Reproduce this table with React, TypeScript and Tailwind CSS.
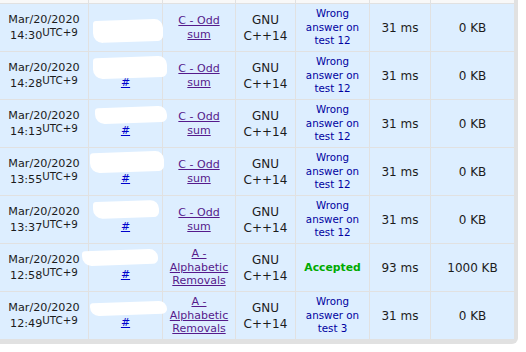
import React from "react"

type Row = {
  time: string
  problem: string[]
  accepted?: boolean
  test?: number
  exec: string
  mem: string
  blob: { l: number; t: number; w: number; h: number }
}

const rows: Row[] = [
  { time: "14:30", problem: ["C - Odd", "sum"], test: 12, exec: "31 ms", mem: "0 KB", blob: { l: 4, t: 16, w: 70, h: 22 } },
  { time: "14:28", problem: ["C - Odd", "sum"], test: 12, exec: "31 ms", mem: "0 KB", blob: { l: 4, t: 5, w: 74, h: 21 } },
  { time: "14:13", problem: ["C - Odd", "sum"], test: 12, exec: "31 ms", mem: "0 KB", blob: { l: 6, t: 7, w: 72, h: 16 } },
  { time: "13:55", problem: ["C - Odd", "sum"], test: 12, exec: "31 ms", mem: "0 KB", blob: { l: 1, t: 4, w: 74, h: 20 } },
  { time: "13:37", problem: ["C - Odd", "sum"], test: 12, exec: "31 ms", mem: "0 KB", blob: { l: 4, t: 5, w: 66, h: 17 } },
  { time: "12:58", problem: ["A -", "Alphabetic", "Removals"], accepted: true, exec: "93 ms", mem: "1000 KB", blob: { l: -7, t: 6, w: 76, h: 15 } },
  { time: "12:49", problem: ["A -", "Alphabetic", "Removals"], test: 3, exec: "31 ms", mem: "0 KB", blob: { l: 1, t: 10, w: 77, h: 13 } },
]

const cols = "grid grid-cols-[89px_74px_73px_60px_74px_61px_83px]"
const cell = "flex items-center justify-center text-center border-r border-b border-[#e1e1e1]"

export default function App() {
  return (
    <div className="min-h-screen bg-white font-['DejaVu_Sans',sans-serif] text-[#1c1c1c]">
      <div className="w-[518px] bg-[#e1e1e1] pr-[4px] pb-[4px] rounded-br-[6px]">
        {/* tail of the previous row */}
        <div className={cols}>
          {[0, 1, 2, 3, 4, 5, 6].map((i) => (
            <div key={i} className={`h-[4px] bg-[#f8f8f8] border-b border-[#e1e1e1] ${i < 6 ? "border-r" : ""}`} />
          ))}
        </div>

        {rows.map((r, i) => (
          <div key={i} className={`${cols} bg-[#ddeeff]`}>
            <div className={`${cell} h-[48px] text-[11.2px] leading-[16px]`}>
              <div className="mt-[1px]">
                Mar/20/2020
                <br />
                <span>{r.time}</span>
                <sup className="text-[10.3px] top-[-0.3em]">UTC+9</sup>
              </div>
            </div>

            <div className={`${cell} relative h-[48px] text-[11px] leading-[13px]`}>
              <div className="mt-[13px]">
                <a className="text-[#0000cc] underline">#</a>
              </div>
              {/* redacted handle */}
              <div
                className="absolute bg-white rounded-[3px_9px_5px_10px] -skew-y-2"
                style={{ left: r.blob.l, top: r.blob.t, width: r.blob.w, height: r.blob.h }}
              />
            </div>

            <div className={`${cell} h-[48px] text-[11px] leading-[13.5px]`}>
              <a className="text-[#551a8b] underline">
                {r.problem.map((p, j) => (
                  <div key={j}>{p}</div>
                ))}
              </a>
            </div>

            <div className={`${cell} h-[48px] text-[12px] leading-[16px]`}>
              <div>
                GNU
                <br />
                C++14
              </div>
            </div>

            <div className={`${cell} h-[48px] text-[10.3px] leading-[13.5px]`}>
              {r.accepted ? (
                <span className="font-bold text-[10.8px] text-[#00aa00]">Accepted</span>
              ) : (
                <div className="text-[#0000a0]">
                  Wrong
                  <br />
                  answer on
                  <br />
                  test {r.test}
                </div>
              )}
            </div>

            <div className={`${cell} h-[48px] text-[12px]`}>{r.exec}</div>

            <div className="flex h-[48px] items-center justify-center border-b border-[#e1e1e1] text-[12px]">{r.mem}</div>
          </div>
        ))}
      </div>
    </div>
  )
}
